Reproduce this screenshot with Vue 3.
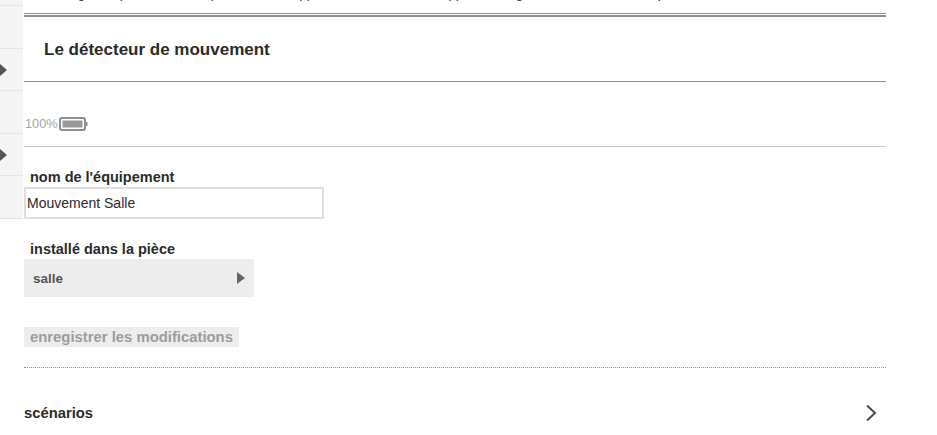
<script setup>
const rows = [
  { h: 6, arrow: false },
  { h: 43, arrow: false },
  { h: 42, arrow: true },
  { h: 43, arrow: false },
  { h: 42, arrow: true },
  { h: 43, arrow: false }
]
const clipped = [
  { text: 'Le long', w: 61 },
  { text: 'camp', w: 42 },
  { text: 'à l\'étamp', w: 91 },
  { text: 'de cet app', w: 96 },
  { text: 'les modes de cet app', w: 149 },
  { text: 'le long', w: 60 },
  { text: 'à la mise à l\'étamp', w: 142 }
]
</script>

<template>
  <div class="page">
    <aside class="side">
      <div v-for="(r, i) in rows" :key="i" class="side-row" :style="{ height: r.h + 'px' }">
        <span v-if="r.arrow" class="side-arrow"></span>
      </div>
    </aside>
    <main class="main">
      <div class="clip">
        <div class="clip-text">
          <span v-for="(c, i) in clipped" :key="i" class="clip-word" :style="{ width: c.w + 'px' }">{{ c.text }}</span>
        </div>
      </div>
      <div class="double"></div>
      <h1 class="title">Le détecteur de mouvement</h1>
      <div class="status">
        <span class="pct">100%</span>
        <svg class="battery" width="29" height="14" viewBox="0 0 29 14">
          <rect x="1" y="1" width="25" height="12" rx="2" fill="#fff" stroke="#8f8f8f" stroke-width="2" />
          <rect x="3.5" y="3.5" width="20" height="7" fill="#999" />
          <rect x="26.5" y="5" width="2" height="4" fill="#8f8f8f" />
        </svg>
      </div>
      <div class="form">
        <label class="label first">nom de l'équipement</label>
        <input class="input" value="Mouvement Salle" />
        <label class="label second">installé dans la pièce</label>
        <div class="select">
          <span>salle</span>
          <span class="select-arrow"></span>
        </div>
        <div class="save">enregistrer les modifications</div>
      </div>
      <div class="scen">
        <span>scénarios</span>
        <svg width="14" height="18" viewBox="0 0 14 18" class="chev">
          <path d="M2 1.5 L10 9 L2 16.5" fill="none" stroke="#4a4a4a" stroke-width="2" />
        </svg>
      </div>
    </main>
  </div>
</template>

<style>
html, body { margin: 0; background: #fff; overflow: hidden; }
</style>

<style scoped>
.page {
  display: flex;
  width: 937px;
  height: 435px;
  overflow: hidden;
  font-family: "Liberation Sans", Arial, sans-serif;
  color: #2b2b2b;
  background: #fff;
}
.side { width: 23px; flex: none; margin-right: 1px; }
.side-row {
  box-sizing: border-box;
  background: #f4f4f4;
  border-bottom: 1px solid #e4e4e4;
  display: flex;
  align-items: center;
}
.side-arrow {
  width: 0;
  height: 0;
  border-left: 7px solid #555;
  border-top: 6px solid transparent;
  border-bottom: 6px solid transparent;
}
.main { width: 862px; flex: none; }
.clip { height: 13px; overflow: hidden; }
.clip-text { display: flex; margin-top: -14px; font-size: 13px; line-height: 15px; }
.clip-word { flex: none; text-align: right; white-space: nowrap; }
.double { height: 1px; border-top: 1px solid #8f8f8f; border-bottom: 2px solid #8f8f8f; }
.title {
  margin: 0;
  height: 65px;
  box-sizing: border-box;
  padding-left: 20px;
  line-height: 65px;
  font-size: 17px;
  font-weight: 700;
  border-bottom: 1px solid #8f8f8f;
}
.status {
  height: 65px;
  box-sizing: border-box;
  border-bottom: 1px solid #c8c8c8;
  display: flex;
  align-items: center;
  padding-top: 19px;
  padding-left: 1px;
  gap: 2px;
}
.pct { font-size: 12.8px; color: #a5a5a5; width: 32px; white-space: nowrap; }
.form { display: flex; flex-direction: column; align-items: flex-start; }
.label { font-size: 14.5px; font-weight: 700; padding-left: 6px; line-height: 16px; }
.label.first { margin-top: 22px; }
.label.second { margin-top: 22px; }
.input {
  box-sizing: border-box;
  width: 300px;
  height: 32px;
  margin-top: 2px;
  border: 2px solid #dedede;
  padding: 0 1px;
  font: 14px "Liberation Sans", Arial, sans-serif;
  color: #2b2b2b;
  outline: none;
}
.select {
  box-sizing: border-box;
  width: 230px;
  height: 38px;
  margin-top: 2px;
  background: #ededed;
  display: flex;
  align-items: center;
  justify-content: space-between;
  padding: 0 9px 0 9px;
  font-size: 13.5px;
  font-weight: 700;
  color: #555;
}
.select-arrow {
  width: 0;
  height: 0;
  border-left: 8px solid #666;
  border-top: 6px solid transparent;
  border-bottom: 6px solid transparent;
}
.save {
  margin-top: 30px;
  background: #ededed;
  color: #9c9c9c;
  font-size: 14.85px;
  font-weight: 700;
  padding: 0 6px;
  line-height: 20px;
  height: 20px;
}
.scen {
  margin-top: 20px;
  border-top: 1px dotted #8f8f8f;
  height: 68px;
  box-sizing: border-box;
  padding-top: 36px;
  display: flex;
  justify-content: space-between;
  font-size: 14.8px;
  font-weight: 700;
  line-height: 18px;
}
.chev { margin-right: 7px; }
</style>
